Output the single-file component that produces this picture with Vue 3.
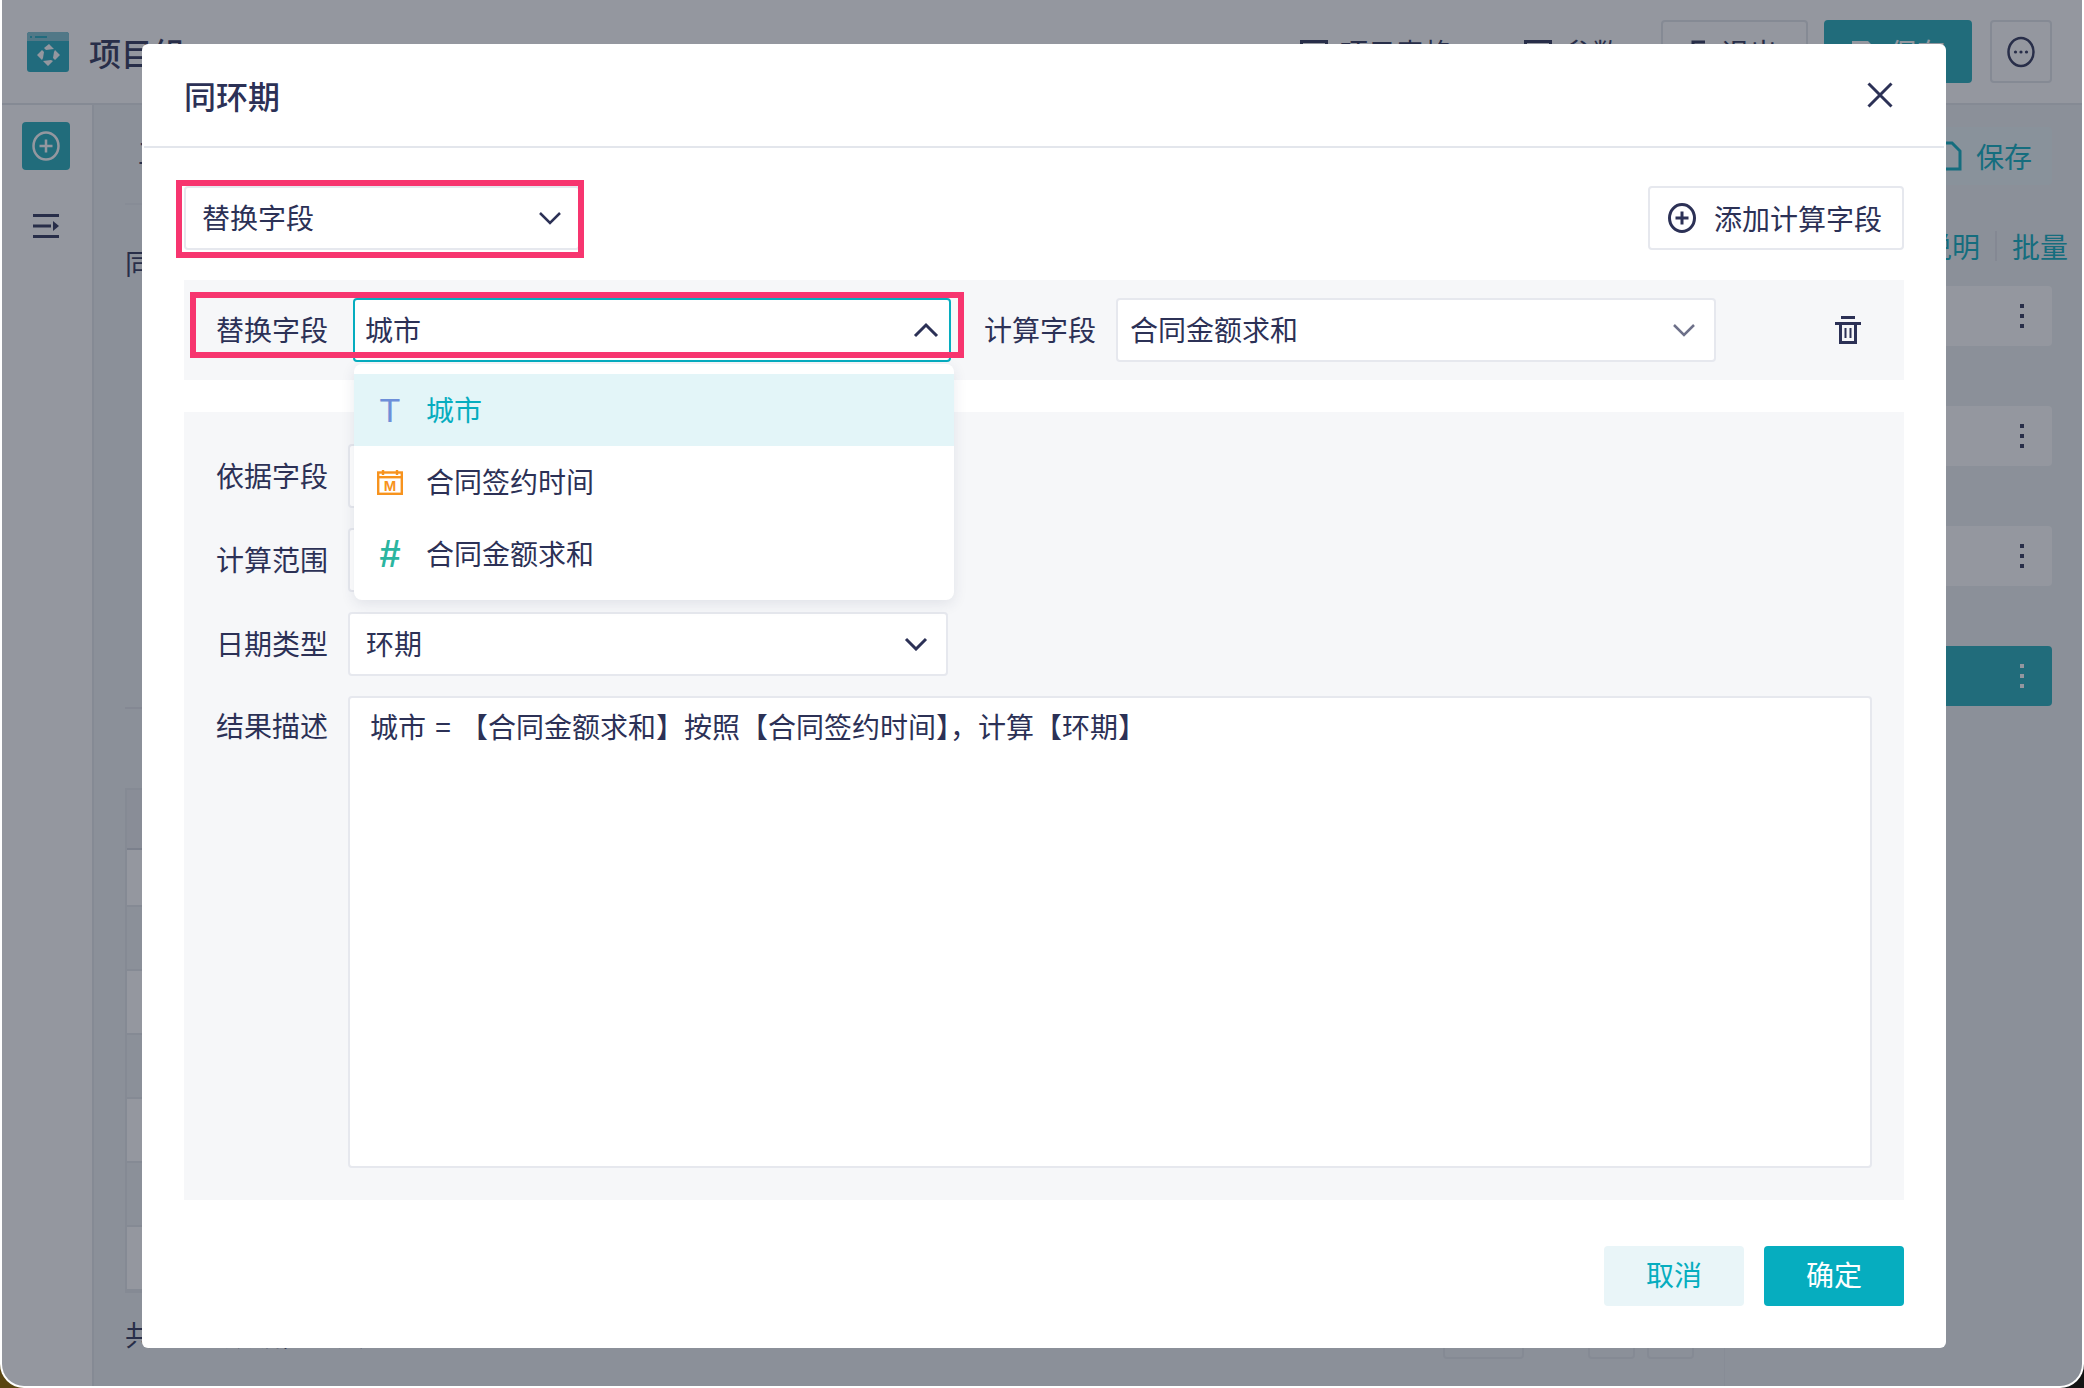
<template>
  <div class="page">
    <!-- Page behind the dialog -->
    <header class="topbar">
      <svg class="logo" width="42" height="40" viewBox="0 0 42 40">
        <rect width="42" height="40" rx="3" fill="#1fa9bd" />
        <path d="M0 9V3a3 3 0 0 1 3-3h36a3 3 0 0 1 3 3v6z" fill="#7cc3d0" />
        <rect x="3" y="4" width="2" height="2" fill="#1fa9bd" />
        <rect x="8" y="4" width="12" height="2" fill="#1fa9bd" />
        <path d="M22 12l5 5-8 1-2-2zM28 18l5 5-5 5-2-2 1-6zM26 29l-5 5-5-5 8-1zM15 28l-5-5 5-5 2 2-1 6z" fill="#fff" />
      </svg>
      <span class="page-title">项目组</span>
      <div class="top-actions">
        <span class="top-link top-link-wide">
          <svg width="28" height="24" viewBox="0 0 28 24"><rect x="1.5" y="1.5" width="25" height="21" fill="none" stroke="#2c3156" stroke-width="3" /></svg>
          项目表格
        </span>
        <span class="top-link">
          <svg width="28" height="24" viewBox="0 0 28 24"><rect x="1.5" y="1.5" width="25" height="21" fill="none" stroke="#2c3156" stroke-width="3" /></svg>
          参数
        </span>
        <button class="top-btn exit-btn">
          <svg width="16" height="24" viewBox="0 0 16 24"><path d="M14 2H2v20" fill="none" stroke="#2c3156" stroke-width="3" /></svg>
          退出
        </button>
        <button class="top-btn save-btn">
          <svg width="24" height="24" viewBox="0 0 24 24"><path d="M1 1h16l6 6v16H1z" fill="#fff" /></svg>
          保存
        </button>
        <button class="top-btn more-btn">
          <svg width="30" height="34" viewBox="0 0 30 34">
            <ellipse cx="15" cy="17" rx="12.500" ry="14" fill="none" stroke="#2c3156" stroke-width="2.500" />
            <circle cx="9.500" cy="17" r="1.600" fill="#2c3156" />
            <circle cx="15" cy="17" r="1.600" fill="#2c3156" />
            <circle cx="20.500" cy="17" r="1.600" fill="#2c3156" />
          </svg>
        </button>
      </div>
    </header>

    <div class="workspace">
      <aside class="sidebar">
        <div class="side-add">
          <svg width="28" height="30" viewBox="0 0 28 30">
            <ellipse cx="14" cy="15" rx="12.500" ry="13.500" fill="none" stroke="#fff" stroke-width="2.500" />
            <path d="M14 8.500v13M7.500 15h13" stroke="#fff" stroke-width="2.500" />
          </svg>
        </div>
        <svg class="side-list" width="26" height="24" viewBox="0 0 26 24">
          <path d="M0 1.500h26M0 12h18M0 22.500h26" stroke="#2c3156" stroke-width="3" />
          <path d="M20 7l6 5-6 5z" fill="#2c3156" />
        </svg>
      </aside>

      <main class="main-col">
        <div class="tool-row">工具</div>
        <div class="sub-row">同环期</div>
        <div class="main-rule"></div>
        <div class="bg-table">
          <div class="bg-head"></div>
          <div v-for="n in 7" :key="n" class="bg-row" :class="{ alt: n % 2 === 0 }"></div>
        </div>
        <div class="bg-footer">
          <span class="bg-count">共 12 条数据，每页</span>
          <div class="pager">
            <span class="pager-box pager-size"></span>
            <span class="pager-box"></span>
            <span class="pager-box"></span>
          </div>
        </div>
      </main>

      <section class="right-col">
        <div class="right-save">
          <svg width="24" height="30" viewBox="0 0 24 30"><path d="M2 2h12l8 8v18H2z" fill="none" stroke="#06adbf" stroke-width="3" /></svg>
          保存
        </div>
        <div class="right-tabs"><span>说明</span><i></i><span>批量</span></div>
        <div v-for="n in 4" :key="n" class="right-card" :class="{ active: n === 4 }">
          <span class="kebab"><b></b><b></b><b></b></span>
        </div>
      </section>
    </div>

    <div class="overlay"></div>

    <!-- Dialog -->
    <div class="modal">
      <div class="modal-head">
        <span class="modal-title">同环期</span>
        <svg class="close" width="26" height="26" viewBox="0 0 26 26">
          <path d="M1.500 1.500l23 23M24.500 1.500l-23 23" stroke="#2c3156" stroke-width="3" />
        </svg>
      </div>

      <div class="modal-body">
        <div class="top-row">
          <div class="select type-select">
            <span>替换字段</span>
            <svg class="chev" width="24" height="14" viewBox="0 0 24 14"><path d="M2 2l10 10L22 2" /></svg>
          </div>
          <button class="add-btn">
            <svg width="28" height="30" viewBox="0 0 28 30">
              <ellipse cx="14" cy="15" rx="12.500" ry="13.500" fill="none" stroke="#2c3156" stroke-width="3" />
              <path d="M14 8.500v13M7.500 15h13" stroke="#2c3156" stroke-width="3" />
            </svg>
            添加计算字段
          </button>
        </div>

        <div class="field-row">
          <label class="label">替换字段</label>
          <div class="replace-wrap">
            <div class="select open">
              <span>城市</span>
              <svg class="chev strong" width="26" height="16" viewBox="0 0 26 16"><path d="M2 14L13 3l11 11" /></svg>
            </div>
            <ul class="dropdown">
              <li v-for="opt in options" :key="opt.name" class="option" :class="{ selected: opt.selected }">
                <span v-if="opt.kind === 'text'" class="opt-icon glyph-t">T</span>
                <svg v-else-if="opt.kind === 'date'" class="opt-icon" width="26" height="25" viewBox="0 0 26 25">
                  <rect x="1.200" y="2.500" width="23.600" height="21.300" fill="none" stroke="#f7931e" stroke-width="2.400" />
                  <rect x="1" y="6" width="24" height="2.400" fill="#f7931e" />
                  <path d="M6 0v5M20 0v5" stroke="#f7931e" stroke-width="2.400" />
                  <text x="13" y="21" text-anchor="middle" font-size="15" font-weight="700" font-family="Liberation Sans" fill="#f7931e">M</text>
                </svg>
                <span v-else class="opt-icon glyph-num">#</span>
                <span class="opt-name">{{ opt.name }}</span>
              </li>
            </ul>
          </div>
          <label class="label calc-label">计算字段</label>
          <div class="select calc-select">
            <span>合同金额求和</span>
            <svg class="chev soft" width="24" height="14" viewBox="0 0 24 14"><path d="M2 2l10 10L22 2" /></svg>
          </div>
          <svg class="trash" width="26" height="28" viewBox="0 0 26 28">
            <path d="M0 7.500h26M6 1.500h14" stroke="#2c3156" stroke-width="3" />
            <path d="M5.500 8v18.500h15V8" fill="none" stroke="#2c3156" stroke-width="3" />
            <path d="M10.500 12v10M15.500 12v10" stroke="#2c3156" stroke-width="2" />
          </svg>
        </div>

        <div class="config-panel">
          <div class="config-row">
            <label class="label">依据字段</label>
            <div class="select wide"></div>
          </div>
          <div class="config-row">
            <label class="label">计算范围</label>
            <div class="select wide"></div>
          </div>
          <div class="config-row">
            <label class="label">日期类型</label>
            <div class="select wide">
              <span>环期</span>
              <svg class="chev strong" width="24" height="14" viewBox="0 0 24 14"><path d="M2 2l10 10L22 2" /></svg>
            </div>
          </div>
          <div class="config-row desc-row">
            <label class="label">结果描述</label>
            <div class="desc-box">城市 = 【合同金额求和】按照【合同签约时间】，计算【环期】</div>
          </div>
        </div>

        <div class="modal-foot">
          <button class="btn cancel">取消</button>
          <button class="btn confirm">确定</button>
        </div>
      </div>

      <!-- Annotation frames -->
      <div class="mark mark-type"></div>
      <div class="mark mark-field"></div>
    </div>
  </div>
</template>

<script setup>
const options = [
  { name: '城市', kind: 'text', selected: true },
  { name: '合同签约时间', kind: 'date' },
  { name: '合同金额求和', kind: 'num' },
]
</script>

<style>
html, body {
  margin: 0;
  background: linear-gradient(90deg, #5a4510 0 30px, #141414 30px);
}
</style>

<style scoped>
* { box-sizing: border-box; }

.page {
  position: relative;
  width: 2084px;
  height: 1388px;
  overflow: hidden;
  background: #fff;
  border: 2px solid #fff;
  border-top: 0;
  border-radius: 0 0 24px 24px;
  font-family: "Noto Sans CJK SC", "Liberation Sans", sans-serif;
  font-size: 28px;
  color: #2c3156;
}

/* background page */
.topbar {
  display: flex;
  align-items: flex-start;
  height: 105px;
  padding: 20px 30px 0 25px;
  border-bottom: 2px solid #e2e5ea;
}

.logo { margin-top: 12px; }

.page-title {
  margin: 9px 0 0 20px;
  font-size: 32px;
  font-weight: 500;
}

.top-actions {
  display: flex;
  align-items: flex-start;
  margin-left: auto;
}

.top-link {
  display: flex;
  align-items: center;
  gap: 12px;
  height: 63px;
  margin-right: 44px;
}

.top-link-wide { margin-right: 72px; }

.top-btn {
  display: flex;
  align-items: center;
  justify-content: center;
  gap: 14px;
  height: 63px;
  margin-left: 16px;
  border: 2px solid #e2e5ea;
  border-radius: 4px;
  background: #fff;
  font: inherit;
  color: inherit;
}

.exit-btn { width: 147px; margin-left: -3px; }
.save-btn { width: 148px; background: #1eabb8; border-color: #1eabb8; color: #fff; }
.more-btn { width: 62px; margin-left: 18px; padding: 0; }

.workspace {
  display: flex;
  height: 1281px;
}

.sidebar {
  display: flex;
  flex-direction: column;
  align-items: center;
  width: 92px;
  flex-shrink: 0;
  padding-right: 2px;
  border-right: 2px solid #e2e5ea;
}

.side-add {
  display: flex;
  align-items: center;
  justify-content: center;
  width: 48px;
  height: 48px;
  margin-top: 17px;
  border-radius: 4px;
  background: #1eabb8;
}

.side-list { margin-top: 44px; }

.main-col {
  display: flex;
  flex-direction: column;
  width: 1630px;
  padding: 0 30px 0 31px;
  background: #eef1f3;
}

.tool-row {
  height: 100px;
  padding: 27px 0 0 13px;
  border-bottom: 2px solid #e6e9ee;
}

.sub-row {
  margin-top: 38px;
  line-height: 40px;
}

.main-rule {
  margin-top: 424px;
  border-top: 2px solid #dfe2e8;
}

.bg-table {
  margin-top: 79px;
  border: 2px solid #e2e5ea;
}

.bg-head {
  height: 60px;
  background: #e9ecf0;
  border-bottom: 2px solid #cfd3da;
}

.bg-row {
  height: 64px;
  background: #fff;
  border-bottom: 2px solid #e2e5ea;
}

.bg-head + .bg-row { height: 57px; }
.bg-row.alt { background: #eef1f3; }

.bg-footer {
  display: flex;
  align-items: flex-start;
  justify-content: space-between;
  margin-top: 16px;
}

.bg-count { margin-top: 5px; }

.pager {
  display: flex;
  gap: 12px;
}

.pager-box {
  width: 47px;
  height: 50px;
  border: 2px solid #e2e5ea;
  border-radius: 4px;
}

.pager-size {
  width: 81px;
  margin-right: 52px;
}

.right-col {
  flex: 1;
  padding: 22px 30px 0 0;
  background: #eef1f3;
  border-left: 1px solid #e6e9ee;
}

.right-save {
  display: flex;
  align-items: center;
  justify-content: flex-end;
  gap: 14px;
  height: 58px;
  padding-right: 20px;
  border-radius: 4px;
  background: #e9f5f8;
  color: #06adbf;
}

.right-tabs {
  display: flex;
  align-items: center;
  justify-content: flex-end;
  gap: 15px;
  height: 40px;
  margin: 41px -16px 0 0;
  color: #06adbf;
}

.right-tabs i {
  width: 2px;
  height: 30px;
  background: #dfe2e8;
}

.right-card {
  display: flex;
  align-items: center;
  justify-content: flex-end;
  height: 60px;
  margin-top: 60px;
  padding-right: 28px;
  border-radius: 4px;
  background: #fff;
}

.right-tabs + .right-card { margin-top: 20px; }
.right-card.active { background: #1eabb8; }

.kebab {
  display: flex;
  flex-direction: column;
  gap: 6px;
}

.kebab b {
  width: 4px;
  height: 4px;
  background: #2c3156;
}

.active .kebab b { background: #fff; }

.overlay {
  position: absolute;
  inset: -2px;
  background: rgba(36, 42, 60, 0.49);
}

/* dialog */
.modal {
  position: absolute;
  left: 140px;
  top: 44px;
  width: 1804px;
  height: 1304px;
  border-radius: 6px;
  background: #fff;
}

.modal-head {
  display: flex;
  align-items: center;
  justify-content: space-between;
  height: 104px;
  margin: 0 2px;
  padding: 0 51px 0 40px;
  border-bottom: 2px solid #e3e6ec;
}

.modal-title {
  font-size: 32px;
  font-weight: 500;
}

.modal-body {
  padding: 38px 42px 0;
}

.top-row {
  display: flex;
  justify-content: space-between;
}

.select {
  display: flex;
  align-items: center;
  justify-content: space-between;
  height: 64px;
  padding: 0 18px;
  border: 2px solid #e6e8ee;
  border-radius: 4px;
  background: #fff;
}

.select > span { margin-bottom: 3px; }

.type-select { width: 396px; padding: 0 0 0 16px; }
.type-select .chev { margin-right: 16px; }

.chev {
  flex-shrink: 0;
}

.chev path {
  fill: none;
  stroke: #2c3156;
  stroke-width: 2.500;
}

.chev.strong path { stroke-width: 3; }
.chev.soft path { stroke: #6d7089; }

.add-btn {
  display: flex;
  align-items: center;
  gap: 18px;
  width: 256px;
  height: 64px;
  padding: 0 0 0 18px;
  border: 2px solid #e6e8ee;
  border-radius: 4px;
  background: #fff;
  font: inherit;
  color: inherit;
}

.field-row {
  display: flex;
  align-items: center;
  height: 100px;
  margin-top: 30px;
  padding-left: 32px;
  background: #f6f7f9;
}

.label {
  width: 112px;
  flex-shrink: 0;
  padding-bottom: 3px;
  text-align: right;
  line-height: 40px;
}

.replace-wrap {
  position: relative;
  width: 598px;
  margin-left: 25px;
}

.select.open {
  border-color: #06adbf;
  padding: 0 10px 0 10px;
}

.dropdown {
  position: absolute;
  left: 1px;
  top: 66px;
  z-index: 2;
  width: 600px;
  margin: 0;
  padding: 10px 0;
  list-style: none;
  border-radius: 8px;
  background: #fff;
  box-shadow: 0 4px 14px rgba(44, 49, 86, 0.1);
}

.option {
  display: flex;
  align-items: center;
  height: 72px;
  padding-left: 23px;
}

.option.selected {
  background: #e3f5f8;
  color: #06adbf;
}

.opt-name { margin-bottom: 3px; }

.opt-icon {
  width: 26px;
  margin-right: 23px;
  flex-shrink: 0;
  text-align: center;
}

.glyph-t {
  font-family: "Liberation Sans", sans-serif;
  font-size: 34px;
  color: #6d8fd9;
}

.glyph-num {
  font-family: "Liberation Sans", sans-serif;
  font-size: 38px;
  font-weight: 700;
  line-height: 38px;
  color: #2bb5a0;
}

.calc-label { margin-left: 33px; }

.calc-select {
  width: 600px;
  margin-left: 20px;
  padding: 0 18px 0 12px;
}

.trash { margin-left: 119px; }

.config-panel {
  display: flex;
  flex-direction: column;
  gap: 20px;
  height: 788px;
  margin-top: 32px;
  padding: 32px 32px 32px;
  background: #f6f7f9;
}

.config-row {
  display: flex;
  align-items: center;
  gap: 20px;
}

.select.wide { width: 600px; padding-right: 18px; padding-left: 16px; }

.desc-row {
  flex: 1;
  align-items: flex-start;
}

.desc-row .label { margin-top: 9px; }

.desc-box {
  flex: 1;
  height: 100%;
  padding: 8px 20px;
  border: 2px solid #e6e8ee;
  border-radius: 4px;
  background: #fff;
  line-height: 40px;
  word-spacing: 3px;
}

.modal-foot {
  display: flex;
  justify-content: flex-end;
  gap: 20px;
  margin-top: 46px;
}

.btn {
  width: 140px;
  height: 60px;
  padding: 0 0 4px;
  border: 0;
  border-radius: 4px;
  font: inherit;
}

.cancel { background: #e9f5f8; color: #06adbf; }
.confirm { background: #06adbf; color: #fff; }

.close { flex-shrink: 0; }

.mark {
  position: absolute;
  z-index: 3;
  border: 6px solid #f7356f;
  pointer-events: none;
}

.mark-type { left: 34px; top: 136px; width: 408px; height: 78px; }
.mark-field { left: 48px; top: 248px; width: 774px; height: 66px; }
</style>
